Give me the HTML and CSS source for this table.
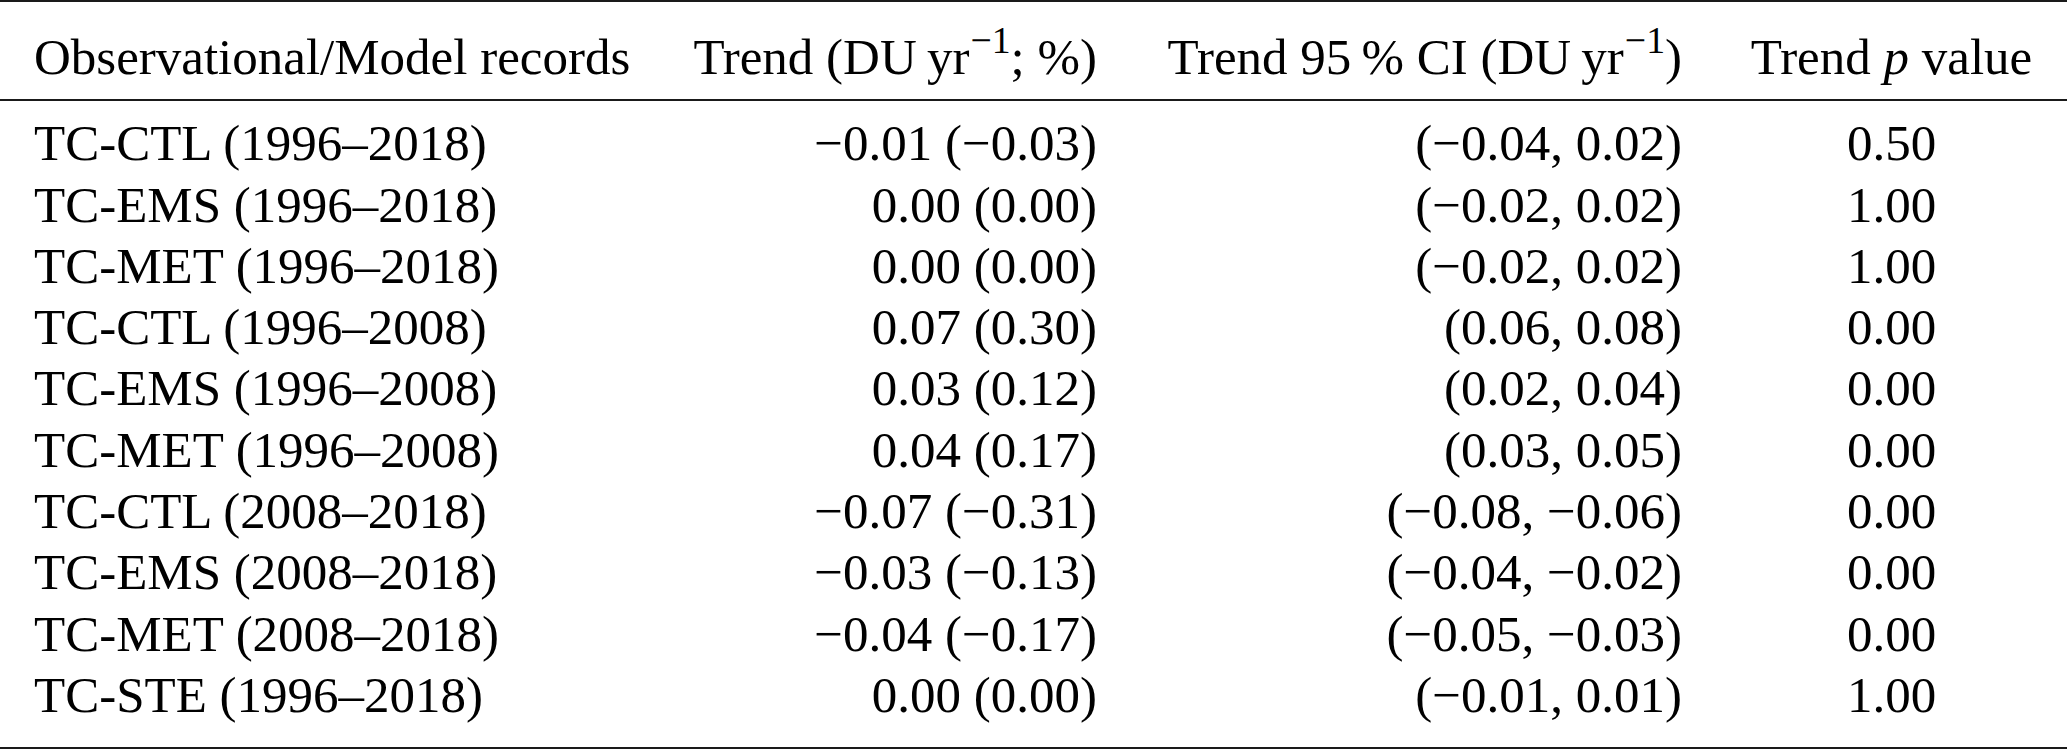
FILE: index.html
```html
<!DOCTYPE html>
<html>
<head>
<title>Trend table</title>
<meta charset="UTF-8">
<meta name="viewport" content="width=device-width, initial-scale=1.0">
<link rel="stylesheet" href="styles.css">
</head>
<body>
<table class="trends">
<colgroup>
<col class="c-name">
<col class="c-trend">
<col class="c-ci">
<col class="c-p">
</colgroup>
<thead>
<tr>
<th class="left">Observational/Model records</th>
<th class="right">Trend (DU&#8201;yr<sup>&minus;1</sup>; %)</th>
<th class="right">Trend 95&#8201;% CI (DU&#8201;yr<sup>&minus;1</sup>)</th>
<th class="mid">Trend <i>p</i> value</th>
</tr>
</thead>
<tbody>
<tr><td class="left">TC-CTL (1996&ndash;2018)</td><td class="right">&minus;0.01 (&minus;0.03)</td><td class="right">(&minus;0.04, 0.02)</td><td class="mid">0.50</td></tr>
<tr><td class="left">TC-EMS (1996&ndash;2018)</td><td class="right">0.00 (0.00)</td><td class="right">(&minus;0.02, 0.02)</td><td class="mid">1.00</td></tr>
<tr><td class="left">TC-MET (1996&ndash;2018)</td><td class="right">0.00 (0.00)</td><td class="right">(&minus;0.02, 0.02)</td><td class="mid">1.00</td></tr>
<tr><td class="left">TC-CTL (1996&ndash;2008)</td><td class="right">0.07 (0.30)</td><td class="right">(0.06, 0.08)</td><td class="mid">0.00</td></tr>
<tr><td class="left">TC-EMS (1996&ndash;2008)</td><td class="right">0.03 (0.12)</td><td class="right">(0.02, 0.04)</td><td class="mid">0.00</td></tr>
<tr><td class="left">TC-MET (1996&ndash;2008)</td><td class="right">0.04 (0.17)</td><td class="right">(0.03, 0.05)</td><td class="mid">0.00</td></tr>
<tr><td class="left">TC-CTL (2008&ndash;2018)</td><td class="right">&minus;0.07 (&minus;0.31)</td><td class="right">(&minus;0.08, &minus;0.06)</td><td class="mid">0.00</td></tr>
<tr><td class="left">TC-EMS (2008&ndash;2018)</td><td class="right">&minus;0.03 (&minus;0.13)</td><td class="right">(&minus;0.04, &minus;0.02)</td><td class="mid">0.00</td></tr>
<tr><td class="left">TC-MET (2008&ndash;2018)</td><td class="right">&minus;0.04 (&minus;0.17)</td><td class="right">(&minus;0.05, &minus;0.03)</td><td class="mid">0.00</td></tr>
<tr><td class="left">TC-STE (1996&ndash;2018)</td><td class="right">0.00 (0.00)</td><td class="right">(&minus;0.01, 0.01)</td><td class="mid">1.00</td></tr>
</tbody>
</table>
</body>
</html>
```

FILE: styles.css
```css
body{
    margin: 0;
    background: #fff;
    color: #000;
    font-family: "Liberation Serif", "Times New Roman", serif;
}
.trends{
    width: 2067px;
    table-layout: fixed;
    border-collapse: separate;
    border-spacing: 0;
    font-size: 51px;
    line-height: 61.3px;
}
.c-name{ width: 650px; }
.c-trend{ width: 481px; }
.c-ci{ width: 585px; }
.c-p{ width: 351px; }
.trends th,
.trends td{
    padding: 0 34px;
    font-weight: normal;
    white-space: nowrap;
}
.trends th{
    padding-top: 25px;
    padding-bottom: 11px;
    border-top: 2px solid #1a1a1a;
    border-bottom: 2px solid #1a1a1a;
}
.trends tbody tr:first-child td{
    padding-top: 12px;
}
.trends tbody tr:last-child td{
    padding-bottom: 21px;
    border-bottom: 2px solid #1a1a1a;
}
.left{ text-align: left; }
.right{ text-align: right; }
.mid{ text-align: center; }
sup{
    font-size: 0.74em;
    line-height: 0;
    vertical-align: 0.55em;
    margin-left: 1px;
}
```
